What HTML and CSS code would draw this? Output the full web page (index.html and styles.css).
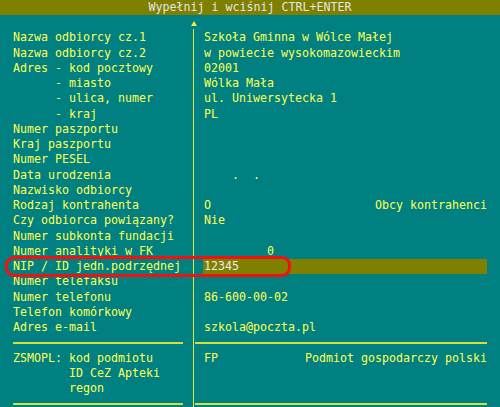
FILE: index.html
```html
<!DOCTYPE html>
<html lang="pl">
<head>
<meta charset="utf-8">
<title>Wypełnij</title>
<link rel="stylesheet" href="styles.css">
</head>
<body>
<div class="title">Wypełnij i wciśnij CTRL+ENTER</div>
<div class="form">
  <div class="divider"><div class="arrow"></div><div class="vline"></div></div>
  <div class="gap"></div>
  <div class="l">Nazwa odbiorcy cz.1</div><div class="r">Szkoła Gminna w Wólce Małej</div>
  <div class="l">Nazwa odbiorcy cz.2</div><div class="r">w powiecie wysokomazowieckim</div>
  <div class="l">Adres - kod pocztowy</div><div class="r">02001</div>
  <div class="l">      - miasto</div><div class="r">Wólka Mała</div>
  <div class="l">      - ulica, numer</div><div class="r">ul. Uniwersytecka 1</div>
  <div class="l">      - kraj</div><div class="r">PL</div>
  <div class="l">Numer paszportu</div><div class="r"></div>
  <div class="l">Kraj paszportu</div><div class="r"></div>
  <div class="l">Numer PESEL</div><div class="r"></div>
  <div class="l">Data urodzenia</div><div class="r">    .  .</div>
  <div class="l">Nazwisko odbiorcy</div><div class="r"></div>
  <div class="l">Rodzaj kontrahenta</div><div class="r split"><span>O</span><span>Obcy kontrahenci</span></div>
  <div class="l">Czy odbiorca powiązany?</div><div class="r">Nie</div>
  <div class="l">Numer subkonta fundacji</div><div class="r"></div>
  <div class="l">Numer analityki w FK</div><div class="r">         0</div>
  <div class="l">NIP / ID jedn.podrzędnej</div><div class="r"><div class="hl">12345</div></div>
  <div class="l">Numer telefaksu</div><div class="r"></div>
  <div class="l">Numer telefonu</div><div class="r">86-600-00-02</div>
  <div class="l">Telefon komórkowy</div><div class="r"></div>
  <div class="l">Adres e-mail</div><div class="r">szkola@poczta.pl</div>
  <div class="l sep"><div class="hline"></div></div><div class="r sep"><div class="hline hr"></div></div>
  <div class="l">ZSMOPL: kod podmiotu</div><div class="r split"><span>FP</span><span>Podmiot gospodarczy polski</span></div>
  <div class="l">        ID CeZ Apteki</div><div class="r"></div>
  <div class="l">        regon</div><div class="r"></div>
  <div class="l sep"><div class="hline"></div></div><div class="r sep"><div class="hline hr"></div></div>
</div>
<div class="marker"></div>
</body>
</html>
```
FILE: styles.css
```css
html, body {
  margin: 0;
  padding: 0;
}
body {
  width: 500px;
  height: 407px;
  overflow: hidden;
  background: #008080;
  font-family: "DejaVu Sans Mono", "Liberation Mono", monospace;
  font-size: 11.63px;
  color: #ffff55;
  position: relative;
}
.title {
  height: 15px;
  line-height: 15px;
  background: #808000;
  color: #e6e6e6;
  text-align: center;
  white-space: pre;
}
.form {
  display: grid;
  grid-template-columns: 180px 1px 1fr;
  grid-template-rows: 15.4px repeat(25, 15.25px);
  padding: 0 13px;
}
.gap {
  grid-column: 1;
}
.divider {
  grid-column: 2;
  grid-row: 1 / -1;
  display: flex;
  flex-direction: column;
  align-items: center;
}
.arrow {
  flex: none;
  width: 0;
  height: 0;
  margin-top: 6px;
  border-left: 3.5px solid transparent;
  border-right: 3.5px solid transparent;
  border-bottom: 5px solid #f0f040;
}
.vline {
  flex: 1;
  width: 1px;
  margin-top: 3px;
  background: #e0e838;
}
.l, .r {
  white-space: pre;
  line-height: 15.25px;
}
.l {
  grid-column: 1;
}
.r {
  grid-column: 3;
  padding-left: 10px;
}
.split {
  display: flex;
  justify-content: space-between;
}
.hl {
  margin-left: -1px;
  padding-left: 1px;
  height: 15px;
  background: #808000;
  color: #ececec;
}
.sep {
  display: flex;
  align-items: center;
}
.sep.r {
  padding-left: 0;
}
.hline {
  flex: 1;
  height: 2px;
  margin-right: 10px;
  background: #d6e03a;
}
.hline.hr {
  margin-right: 0;
  margin-left: 1px;
}
.marker {
  position: absolute;
  left: 5px;
  top: 256px;
  width: 286px;
  height: 21px;
  box-sizing: border-box;
  border: 3px solid #f41010;
  border-radius: 9px;
}
```
